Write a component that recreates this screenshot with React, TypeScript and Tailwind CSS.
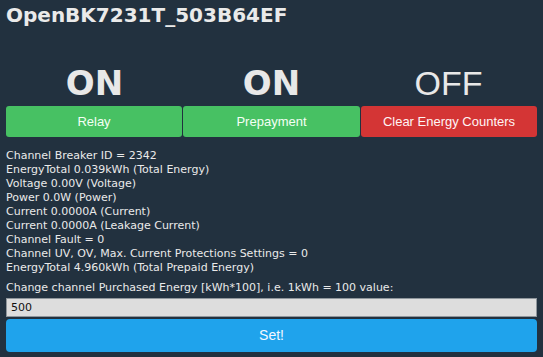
import React from "react";

const lines = [
  "Channel Breaker ID = 2342",
  "EnergyTotal 0.039kWh (Total Energy)",
  "Voltage 0.00V (Voltage)",
  "Power 0.0W (Power)",
  "Current 0.0000A (Current)",
  "Current 0.0000A (Leakage Current)",
  "Channel Fault = 0",
  "Channel UV, OV, Max. Current Protections Settings = 0",
  "EnergyTotal 4.960kWh (Total Prepaid Energy)",
];

export default function App() {
  return (
    <div className="w-[543px] h-[357px] bg-[#22313f] text-[#eaeaea] overflow-hidden px-[6px] font-['DejaVu_Sans',Verdana,sans-serif]">
      <div className="pt-[3px] text-[20px] font-bold leading-[24px] text-[#eaeaea]">OpenBK7231T_503B64EF</div>
      <div className="mt-[36px] flex text-[34px] leading-[40px] text-[#e8e8e8]">
        <div className="w-[177px] text-center font-bold font-['DejaVu_Sans',sans-serif]">ON</div>
        <div className="w-[177px] text-center font-bold font-['DejaVu_Sans',sans-serif]">ON</div>
        <div className="w-[177px] text-center font-['Liberation_Sans',Arial,sans-serif]">OFF</div>
      </div>
      <div className="mt-[3px] flex gap-px text-[13px] font-['Liberation_Sans',Arial,sans-serif]">
        <div className="w-[176px] h-[31px] rounded-[3px] bg-[#47c163] flex items-center justify-center text-[#f4fff4]">Relay</div>
        <div className="w-[177px] h-[31px] rounded-[3px] bg-[#47c163] flex items-center justify-center text-[#f4fff4]">Prepayment</div>
        <div className="w-[176px] h-[31px] rounded-[3px] bg-[#d43535] flex items-center justify-center text-[#fff4f4]">Clear Energy Counters</div>
      </div>
      <div className="mt-[12px] text-[11px] leading-[14px]">
        {lines.map((l) => (
          <div key={l}>{l}</div>
        ))}
      </div>
      <div className="mt-[6px] text-[11px] leading-[14px]">Change channel Purchased Energy [kWh*100], i.e. 1kWh = 100 value:</div>
      <div className="mt-[3px] h-[19px] w-[531px] bg-[#dddddd] border border-[#8f969c] text-[#111] text-[11px] leading-[17px] pl-[4px]">500</div>
      <div className="mt-[2px] h-[33px] w-[531px] rounded-[4px] bg-[#1fa3ec] flex items-center justify-center text-[14px] text-[#f4f8ff] font-['Liberation_Sans',Arial,sans-serif]">Set!</div>
    </div>
  );
}
